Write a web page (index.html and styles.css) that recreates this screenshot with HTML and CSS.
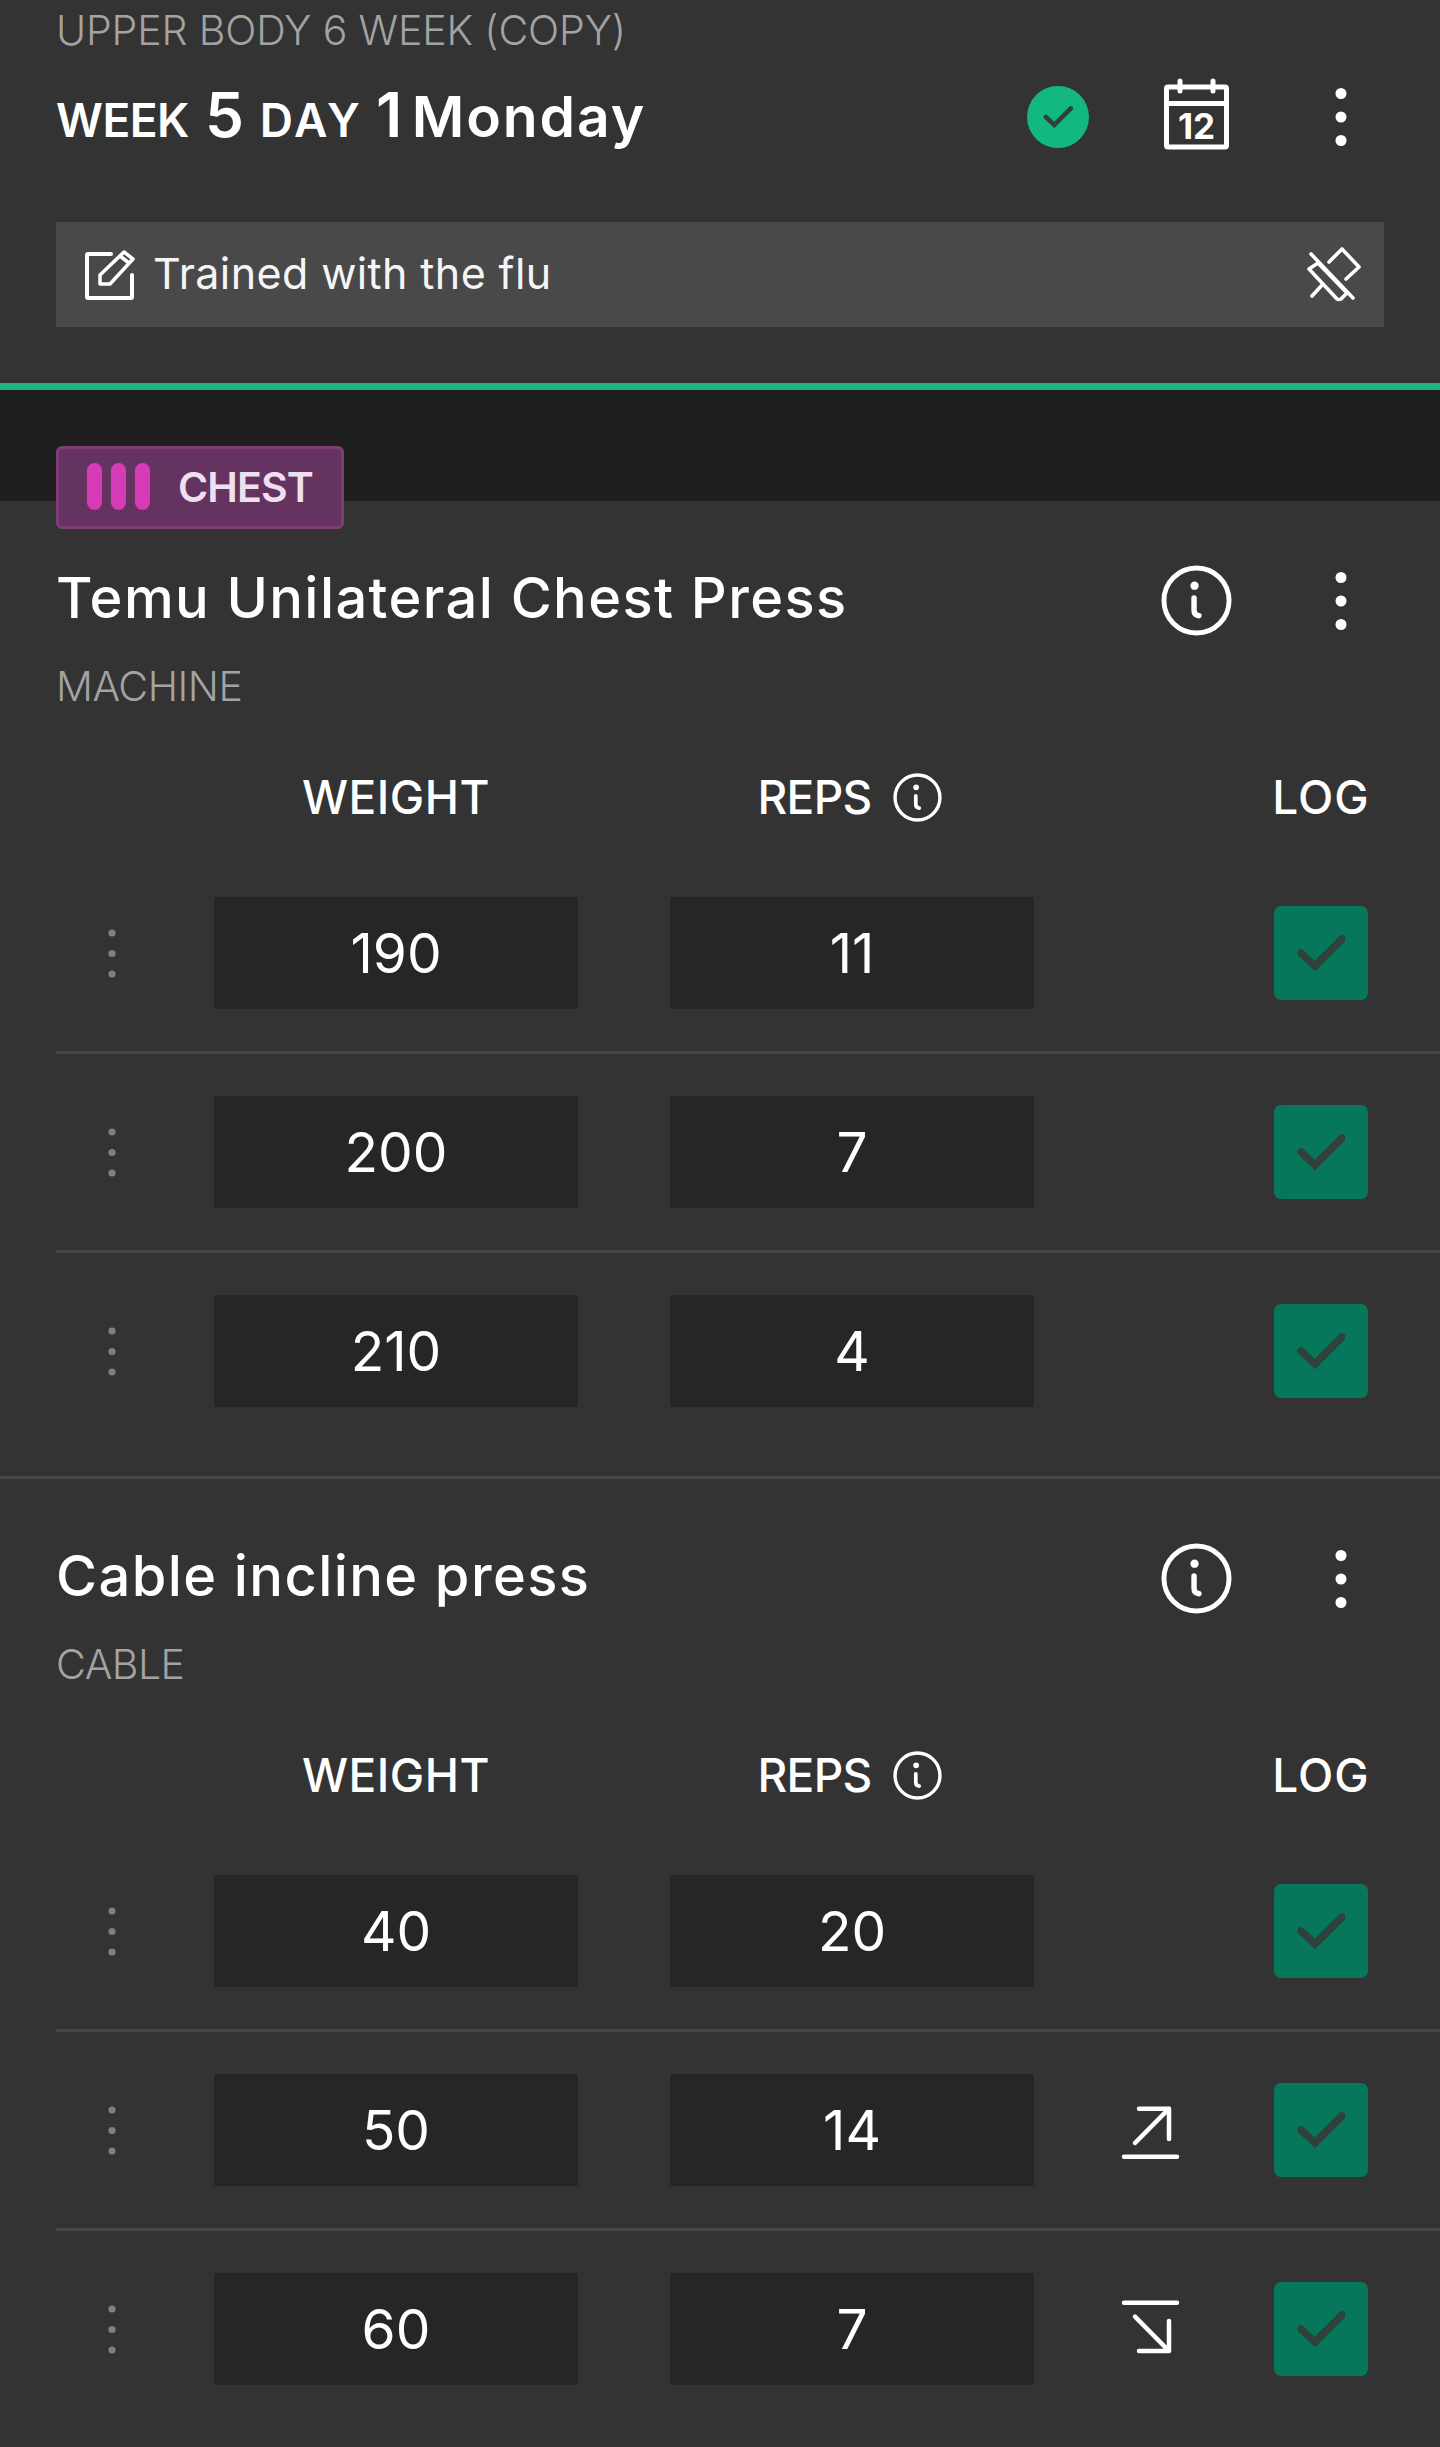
FILE: index.html
```html
<!DOCTYPE html>
<html lang="en">
<head>
<meta charset="utf-8">
<title>Workout log</title>
<link rel="stylesheet" href="styles.css">
</head>
<body>
<svg class="sprite" aria-hidden="true">
  <symbol id="kebab" viewBox="0 0 12 60"><circle cx="6" cy="6.500" r="5.500"/><circle cx="6" cy="30" r="5.500"/><circle cx="6" cy="53.500" r="5.500"/></symbol>
  <symbol id="info" viewBox="0 0 72 72"><circle class="st" cx="36" cy="36" r="33" stroke-width="5"/><circle cx="34" cy="21" r="4.200"/><path class="st" d="M33.500 33.500V46q0 5 5 5.500" stroke-width="5.500"/></symbol>
  <symbol id="tick" viewBox="0 0 48 36"><path class="tk" d="M4 18l14 13L45 4" stroke-width="7.500"/></symbol>
  <symbol id="grip" viewBox="0 0 8 49"><circle cx="4" cy="4" r="3.600"/><circle cx="4" cy="24.500" r="3.600"/><circle cx="4" cy="45" r="3.600"/></symbol>
</svg>
<main class="app">
  <header class="top">
    <div class="plan">UPPER BODY 6 WEEK (COPY)</div>
    <div class="top-row">
      <h1 class="day"><span class="small">WEEK</span> <span class="num num-week">5</span> <span class="small small-day">DAY</span> <span class="num">1</span> <span class="weekday">Monday</span></h1>
      <div class="actions">
        <span class="done"><svg class="done-tick"><use href="#tick"/></svg></span>
        <svg class="cal" viewBox="0 0 71 71"><path class="st" d="M7 5h57a1.500 1.500 0 0 1 1.500 1.500v57a1.500 1.500 0 0 1-1.500 1.500H7a1.500 1.500 0 0 1-1.500-1.500v-57A1.500 1.500 0 0 1 7 5zM5.500 21.500h60M19 -1v10M52 -1v10" stroke-width="5"/><text class="cal-num" x="35.500" y="56.500">12</text></svg>
        <svg class="kebab"><use href="#kebab"/></svg>
      </div>
    </div>
    <div class="note">
      <svg class="note-edit" viewBox="0 0 52 52"><path class="st" d="M27 5H4a1 1 0 0 0-1 1v42a1 1 0 0 0 1 1h43a1 1 0 0 0 1-1V26" stroke-width="4"/><path class="st" d="M16 35v-9L40 3l9 7-23 25zM36 7l9 7" stroke-width="3.500"/></svg>
      <span class="note-text">Trained with the flu</span>
      <svg class="note-pin" viewBox="0 0 60 60"><path class="st" d="M5 9l42 44M40 34l13-12L36 4 23 17M3 24l9-6 29 30-6 6q-2 1-4 0zM17 39L6 51" stroke-width="3.600"/></svg>
    </div>
  </header>
  <div class="band"></div>

  <section class="exercise">
    <div class="chip"><span class="bars"><i></i><i></i><i></i></span>CHEST</div>
    <div class="ex-head">
      <h2 class="ex-name">Temu Unilateral Chest Press</h2>
      <div class="actions">
        <svg class="info"><use href="#info"/></svg>
        <svg class="kebab"><use href="#kebab"/></svg>
      </div>
    </div>
    <div class="ex-type">MACHINE</div>
    <div class="grid cols">
      <span class="col col-weight">WEIGHT</span>
      <span class="col col-reps"><span class="reps-label">REPS</span> <svg class="info-sm"><use href="#info"/></svg></span>
      <span class="col col-log">LOG</span>
    </div>
    <div class="grid row">
      <svg class="grip"><use href="#grip"/></svg>
      <div class="val">190</div><div class="val reps">11</div>
      <span class="trend"></span>
      <span class="log"><svg class="log-tick"><use href="#tick"/></svg></span>
    </div>
    <div class="grid row">
      <svg class="grip"><use href="#grip"/></svg>
      <div class="val">200</div><div class="val reps">7</div>
      <span class="trend"></span>
      <span class="log"><svg class="log-tick"><use href="#tick"/></svg></span>
    </div>
    <div class="grid row">
      <svg class="grip"><use href="#grip"/></svg>
      <div class="val">210</div><div class="val reps">4</div>
      <span class="trend"></span>
      <span class="log"><svg class="log-tick"><use href="#tick"/></svg></span>
    </div>
  </section>

  <section class="exercise">
    <div class="ex-head">
      <h2 class="ex-name">Cable incline press</h2>
      <div class="actions">
        <svg class="info"><use href="#info"/></svg>
        <svg class="kebab"><use href="#kebab"/></svg>
      </div>
    </div>
    <div class="ex-type">CABLE</div>
    <div class="grid cols">
      <span class="col col-weight">WEIGHT</span>
      <span class="col col-reps"><span class="reps-label">REPS</span> <svg class="info-sm"><use href="#info"/></svg></span>
      <span class="col col-log">LOG</span>
    </div>
    <div class="grid row">
      <svg class="grip"><use href="#grip"/></svg>
      <div class="val">40</div><div class="val reps">20</div>
      <span class="trend"></span>
      <span class="log"><svg class="log-tick"><use href="#tick"/></svg></span>
    </div>
    <div class="grid row">
      <svg class="grip"><use href="#grip"/></svg>
      <div class="val">50</div><div class="val reps">14</div>
      <span class="trend"><svg class="arrow" viewBox="0 0 62 60"><path class="st" d="M5 56.700h53M16 43L50 8.700M20 8.700h30V39" stroke-width="4.500"/></svg></span>
      <span class="log"><svg class="log-tick"><use href="#tick"/></svg></span>
    </div>
    <div class="grid row">
      <svg class="grip"><use href="#grip"/></svg>
      <div class="val">60</div><div class="val reps">7</div>
      <span class="trend"><svg class="arrow" viewBox="0 0 62 60"><path class="st" d="M5 3.700h53M16 17.700L50 52M20 52h30V22" stroke-width="4.500"/></svg></span>
      <span class="log"><svg class="log-tick"><use href="#tick"/></svg></span>
    </div>
  </section>
</main>
</body>
</html>
```
FILE: styles.css
```css
* { box-sizing: border-box; }

html, body {
  margin: 0;
  background: #333333;
}

body {
  color: #ffffff;
  font-family: Inter, "Liberation Sans", sans-serif;
}

h1, h2 { margin: 0; }

.sprite { position: absolute; width: 0; height: 0; }

svg { fill: #ffffff; overflow: visible; }

.st {
  fill: none;
  stroke: #ffffff;
  stroke-linecap: round;
  stroke-linejoin: round;
}

.tk {
  fill: none;
  stroke: #30403b;
  stroke-linecap: round;
  stroke-linejoin: miter;
}

.app { width: 1440px; overflow: hidden; }

/* Day header */
.top {
  padding: 2px 56px 56px;
  border-bottom: 7px solid #1fb383;
}

.plan {
  height: 60px;
  font-size: 41px;
  font-weight: 300;
  line-height: 57px;
  color: #a3a3a3;
  letter-spacing: -0.15px;
}

.top-row {
  display: flex;
  align-items: center;
  justify-content: space-between;
  height: 110px;
  margin-bottom: 50px;
}

.day {
  font-size: 54px;
  font-weight: 600;
  line-height: 110px;
  letter-spacing: -0.5px;
  white-space: nowrap;
}

.small { font-size: 46px; }
.small-day { margin-left: 3px; letter-spacing: 3px; }
.num { font-size: 62px; }
.num-week { margin-left: 3px; }
.weekday { margin-left: -3px; font-size: 57px; letter-spacing: 1.9px; }

.actions {
  display: flex;
  align-items: center;
  gap: 66px;
}

.done {
  display: flex;
  align-items: center;
  justify-content: center;
  width: 62px;
  height: 62px;
  margin-right: 6px;
  border-radius: 50%;
  background: #13b881;
}

.done-tick { width: 30px; height: 22px; }

.cal { width: 71px; height: 71px; }

.cal-num {
  font-family: Inter, sans-serif;
  font-size: 35px;
  font-weight: 700;
  text-anchor: middle;
  fill: #ffffff;
}

.kebab { width: 86px; height: 60px; }

.note {
  display: flex;
  align-items: center;
  height: 105px;
  padding: 0 18px 0 28px;
  background: #494949;
}

.note-edit { width: 52px; height: 52px; flex: none; }

.note-text {
  flex: 1;
  margin-left: 17px;
  padding-bottom: 3px;
  font-size: 43px;
  font-weight: 400;
  letter-spacing: 0.4px;
  color: #f5f5f5;
}

.note-pin { width: 60px; height: 60px; flex: none; }

.band { height: 111px; background: #1e1e1e; }

/* Exercise card */
.exercise {
  position: relative;
  padding-top: 64px;
  padding-bottom: 27px;
  border-bottom: 3px solid #484848;
}

.exercise:last-child {
  padding-bottom: 0;
  border-bottom: 0;
}

.chip {
  position: absolute;
  top: -55px;
  left: 56px;
  display: flex;
  align-items: center;
  gap: 28px;
  width: 288px;
  height: 83px;
  padding: 0 0 2px 28px;
  border: 3px solid #7f3c78;
  border-radius: 6px;
  background: #64335f;
  font-size: 41px;
  font-weight: 600;
  letter-spacing: -0.9px;
  color: #efe0ef;
}

.bars { display: flex; gap: 9px; }

.bars i {
  width: 15px;
  height: 47px;
  border-radius: 8px;
  background: #d63bb8;
}

.ex-head {
  display: flex;
  align-items: center;
  justify-content: space-between;
  height: 71px;
  padding: 0 56px;
}

.ex-name {
  padding-bottom: 6px;
  font-size: 56px;
  font-weight: 500;
  letter-spacing: 1.4px;
}

.info { width: 71px; height: 71px; }

.ex-type {
  height: 100px;
  padding-left: 56px;
  font-size: 41px;
  font-weight: 300;
  letter-spacing: -0.5px;
  line-height: 100px;
  color: #a3a3a3;
}

.grid {
  display: grid;
  grid-template-columns: 158px 364px 456px 1fr 94px;
  align-items: center;
  margin-left: 56px;
  padding-right: 72px;
}

.cols { height: 119px; padding-top: 3px; }

.col {
  font-size: 46px;
  font-weight: 500;
  text-align: center;
}

.col-weight { grid-column: 2; letter-spacing: 0.5px; }

.col-reps {
  grid-column: 3;
  justify-self: end;
  display: flex;
  align-items: center;
  justify-content: center;
  gap: 22px;
  width: 360px;
  margin-right: 4px;
}

.reps-label { letter-spacing: -0.7px; }

.col-log { grid-column: 5; letter-spacing: 1px; white-space: nowrap; justify-self: center; }

.info-sm { width: 49px; height: 49px; }

.row {
  height: 196px;
  border-bottom: 3px solid #484848;
  box-sizing: content-box;
}

.row:last-child { border-bottom: 0; }

.grip {
  width: 8px;
  height: 49px;
  margin-left: 52px;
  fill: #808080;
}

.val {
  height: 112px;
  border-radius: 2px;
  background: #262626;
  font-size: 55px;
  font-weight: 400;
  line-height: 112px;
  text-align: center;
}

.reps { justify-self: end; width: 364px; }

.trend {
  display: flex;
  justify-content: center;
  padding-right: 9px;
}

.arrow { width: 62px; height: 60px; }

.log {
  display: flex;
  align-items: center;
  justify-content: center;
  height: 94px;
  border-radius: 7px;
  background: #06775a;
}

.log-tick { width: 48px; height: 36px; }
```
